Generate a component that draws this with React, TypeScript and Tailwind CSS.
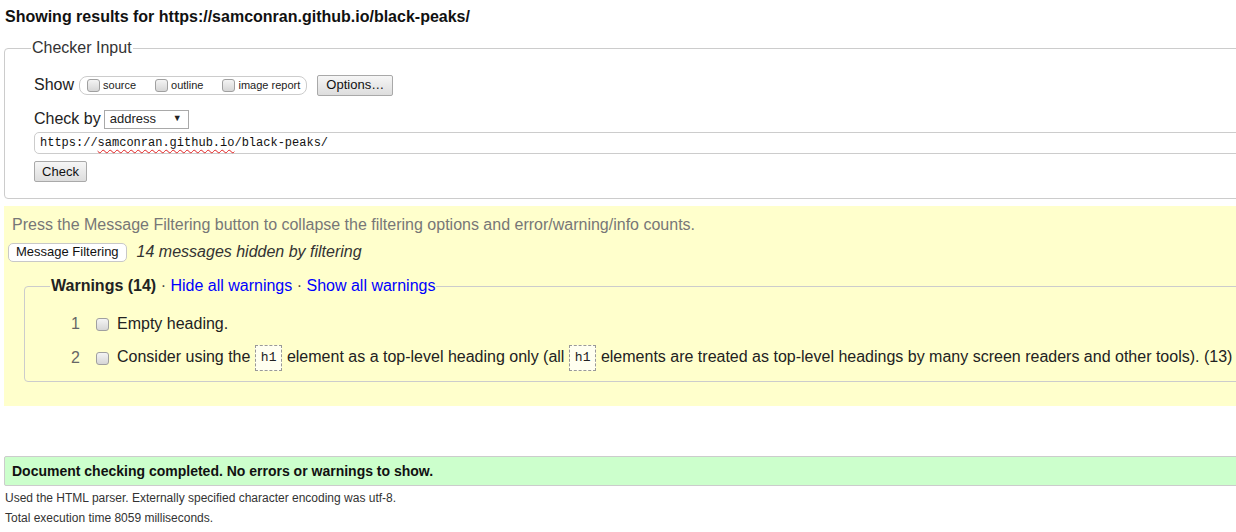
import React from "react";

function Box() {
  return (
    <span className="inline-block w-[13px] h-[13px] rounded-[3px] border border-[#a0a0a0] bg-linear-to-b from-[#f4f4f4] to-[#d6d6d6] shrink-0" />
  );
}

function GrayButton({ label, className }: { label: string; className?: string }) {
  return (
    <span
      className={
        "flex items-center justify-center h-[21px] border border-[#a9a9a9] rounded-[2px] bg-linear-to-b from-[#f6f6f6] to-[#dddddd] text-[13px] text-[#111] " +
        (className ?? "")
      }
    >
      {label}
    </span>
  );
}

function Code() {
  return (
    <code className="inline-block font-['Liberation_Mono',monospace] text-[13px] leading-[24px] px-[5px] border border-dashed border-[#999] bg-[#fffff0] align-middle">
      h1
    </code>
  );
}

export default function App() {
  const items = [
    { n: 1, text: <span>Empty heading.</span> },
    {
      n: 2,
      text: (
        <span>
          Consider using the <Code /> element as a top-level heading only (all <Code /> elements are
          treated as top-level headings by many screen readers and other tools). (13)
        </span>
      ),
    },
  ];

  return (
    <div className="w-[1236px] h-[532px] overflow-hidden bg-white font-['Liberation_Sans',Arial,sans-serif] text-[#222]">
      <div className="w-[1262px] px-[4px]">
        {/* heading */}
        <h2 className="pt-[8px] pl-[1px] text-[16px] leading-[18px] font-bold text-[#111] whitespace-nowrap">
          Showing results for https://samconran.github.io/black-peaks/
        </h2>

        {/* checker input */}
        <fieldset className="mt-[13px] border border-[#cccccc] rounded-[4px] pl-[26px] pb-[16px]">
          <legend className="px-px text-[16px] leading-[18px] text-[#333]">Checker Input</legend>

          <div className="pl-[3px]">
            <div className="mt-[17px] flex items-center h-[22px]">
              <span className="text-[16px] text-[#222]">Show</span>
              <div className="ml-[5px] flex items-center h-[19px] border border-[#cccccc] rounded-[8px] pl-[7px] pr-[6px] gap-[19px] text-[11px]">
                <label className="flex items-center gap-[3px]">
                  <Box />
                  <span>source</span>
                </label>
                <label className="flex items-center gap-[3px]">
                  <Box />
                  <span>outline</span>
                </label>
                <label className="flex items-center gap-[3px]">
                  <Box />
                  <span>image report</span>
                </label>
              </div>
              <GrayButton label="Options…" className="ml-[10px] w-[76px]" />
            </div>

            <div className="mt-[13px] flex items-center h-[20px]">
              <span className="text-[16px] text-[#222]">Check by</span>
              <div className="ml-[3px] flex items-center justify-between w-[85px] h-[19px] border border-[#a9a9a9] bg-white pl-[5px] pr-[6px] text-[13px]">
                <span>address</span>
                <span className="text-[9px]">▼</span>
              </div>
            </div>

            <div className="mt-[3px] flex items-center h-[22px] border border-[#cccccc] rounded-[5px] pl-[5px] bg-white">
              <span className="font-['Liberation_Mono',monospace] text-[12px] text-[#111] whitespace-nowrap">
                https://
                <span className="underline decoration-wavy decoration-[#e02020] decoration-1 underline-offset-[3px]">
                  samconran.github.io
                </span>
                /black-peaks/
              </span>
            </div>

            <div className="mt-[7px] flex">
              <GrayButton label="Check" className="w-[53px]" />
            </div>
          </div>
        </fieldset>

        {/* filtering */}
        <div className="mt-[7px] bg-[#ffffcc] px-[4px] pt-[10px] pb-[24px]">
          <p className="pl-[4px] text-[16px] leading-[18px] text-[#777777] whitespace-nowrap">
            Press the Message Filtering button to collapse the filtering options and error/warning/info counts.
          </p>
          <div className="mt-[6px] flex items-center">
            <span className="flex items-center h-[19px] px-[7px] border border-[#c8c8c8] rounded-[5px] bg-white text-[13px] text-[#111]">
              Message Filtering
            </span>
            <span className="ml-[10px] italic text-[16px] text-[#333]">14 messages hidden by filtering</span>
          </div>

          <fieldset className="mt-[13px] ml-[16px] border border-[#cccccc] rounded-[4px] pl-[25px] pb-[10px]">
            <legend className="px-px text-[16px] leading-[18px] whitespace-nowrap">
              <b className="text-[#222]">Warnings (14)</b>
              <span className="text-[#444]"> · </span>
              <span className="text-[#0000ff]">Hide all warnings</span>
              <span className="text-[#444]"> · </span>
              <span className="text-[#0000ff]">Show all warnings</span>
            </legend>

            <div className="mt-[16px] flex flex-col gap-[8px]">
              {items.map((it) => (
                <div key={it.n} className="flex items-center h-[26px] text-[16px] whitespace-nowrap">
                  <span className="w-[30px] text-right text-[#666]">{it.n}</span>
                  <span className="ml-[16px] flex">
                    <Box />
                  </span>
                  <span className="ml-[8px] text-[#222]">{it.text}</span>
                </div>
              ))}
            </div>
          </fieldset>
        </div>

        {/* result */}
        <div className="mt-[50px] flex items-center h-[30px] border border-[#cccccc] rounded-[2px] bg-[#ccffcc] pl-[7px]">
          <span className="text-[14px] font-bold text-[#111]">
            Document checking completed. No errors or warnings to show.
          </span>
        </div>
        <p className="mt-[2px] pl-[1px] text-[12px] leading-[20px] text-[#333]">
          Used the HTML parser. Externally specified character encoding was utf-8.
        </p>
        <p className="pl-[1px] text-[12px] leading-[20px] text-[#333]">Total execution time 8059 milliseconds.</p>
      </div>
    </div>
  );
}
